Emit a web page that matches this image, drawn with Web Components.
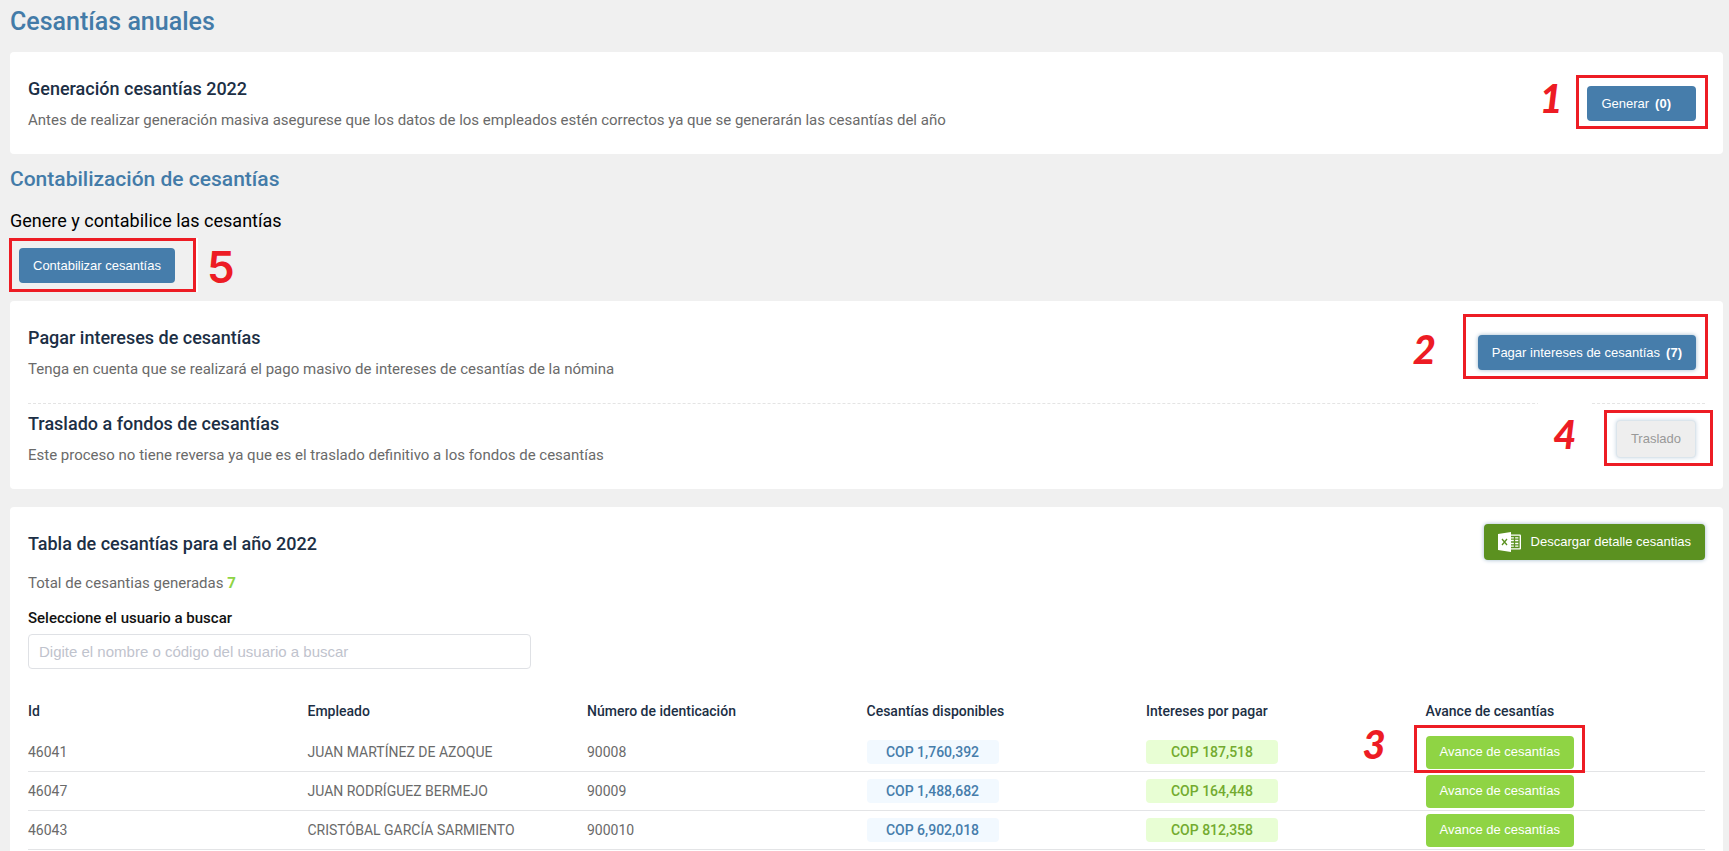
<!DOCTYPE html>
<html lang="es">
<head>
<meta charset="utf-8">
<meta name="viewport" content="width=device-width, initial-scale=1">
<title>Cesantías anuales</title>
<style>
  html, body { margin: 0; }
  body { background: #f0f0f0; font-family: Roboto, "Noto Sans", sans-serif; color: #000; }
</style>
</head>
<body>
<severance-page></severance-page>

<template id="severance-page">
  <style>
    :host { display: flex; flex-direction: column; box-sizing: border-box; min-height: 100vh; padding: 8px 6px 0 10px; }
    h1, h2, p { margin: 0; }
    h1, .section { font-weight: 500; color: #437ba8; }
    h1 { font-size: 25px; line-height: 28px; margin-bottom: 16px; }
    .section { font-size: 21px; line-height: 26px; margin: 12px 0 16px; }
    .lead { font-size: 18px; line-height: 26px; margin-bottom: 14px; }
    .accounting { margin-bottom: 18px; }
    .accounting call-out { margin-left: 9px; }
    ui-card + ui-card { margin-top: 18px; }
    .fill { flex: 1; --card-radius: 4px 4px 0 0; }
    #frame1 { --top: 11px; --right: 12px; --bottom: 8px; --left: 11px; --num-left: -48px; --num-top: -12px; }
    #frame2 { --top: 21px; --right: 12px; --bottom: 9px; --left: 15px; --num-left: -65px; --num-top: -10px; }
    #frame4 { --top: 10px; --right: 17px; --bottom: 8px; --left: 12px; --num-left: -78px; --num-top: -18px;
              --num-width: 54px; --num-paint: #fff; --num-font: italic 900 40px/64px Lato, sans-serif; }
    #frame5 { --top: 10px; --right: 21px; --bottom: 9px; --left: 10px; --num-left: 188px; --num-top: -5px;
              --num-font: normal 600 44px/48px Inter, sans-serif; --edge: 2px 0 #fff; }
  </style>
  <h1>Cesantías anuales</h1>
  <ui-card>
    <action-row heading="Generación cesantías 2022">
      Antes de realizar generación masiva asegurese que los datos de los empleados estén correctos ya que se generarán las cesantías del año
      <call-out slot="action" id="frame1" number="1"><ui-button class="wide" count="(0)">Generar</ui-button></call-out>
    </action-row>
  </ui-card>
  <section class="accounting">
    <h2 class="section">Contabilización de cesantías</h2>
    <p class="lead">Genere y contabilice las cesantías</p>
    <call-out id="frame5" number="5"><ui-button>Contabilizar cesantías</ui-button></call-out>
  </section>
  <ui-card>
    <action-row heading="Pagar intereses de cesantías">
      Tenga en cuenta que se realizará el pago masivo de intereses de cesantías de la nómina
      <call-out slot="action" id="frame2" number="2"><ui-button raised count="(7)">Pagar intereses de cesantías</ui-button></call-out>
    </action-row>
    <action-row divided heading="Traslado a fondos de cesantías">
      Este proceso no tiene reversa ya que es el traslado definitivo a los fondos de cesantías
      <call-out slot="action" id="frame4" number="4"><ui-button disabled raised>Traslado</ui-button></call-out>
    </action-row>
  </ui-card>
  <ui-card class="fill">
    <severance-summary></severance-summary>
    <user-search></user-search>
    <severance-table></severance-table>
  </ui-card>
</template>

<template id="ui-card">
  <style>
    :host { display: block; background: #fff; border-radius: var(--card-radius, 4px); padding: 0 18px; }
  </style>
  <slot></slot>
</template>

<template id="action-row">
  <style>
    :host { display: flex; align-items: center; justify-content: space-between; padding: 26px 9px 25px 0; }
    :host([divided]) { padding-top: 9px; border-top: 1px dashed #e4e4e4; }
    h2 { margin: 0 0 11px; font-size: 18px; line-height: 22px; font-weight: 500; color: #1c2f45; }
    p { margin: 0; font-size: 15px; line-height: 18px; color: #6a6a6a; }
  </style>
  <div><h2></h2><p><slot></slot></p></div>
  <slot name="action"></slot>
</template>

<template id="call-out">
  <style>
    :host { display: inline-block; position: relative; vertical-align: top; }
    .frame { position: absolute; top: calc(0px - var(--top)); right: calc(0px - var(--right)); bottom: calc(0px - var(--bottom)); left: calc(0px - var(--left));
             border: 3px solid #ed1c24; box-shadow: var(--edge, none); pointer-events: none; }
    .number { position: absolute; left: var(--num-left); top: var(--num-top); width: var(--num-width, auto); text-align: center;
              font: var(--num-font, italic 900 40px/48px Lato, sans-serif); color: #ed1c24; background: var(--num-paint, none); }
  </style>
  <slot></slot>
  <span class="frame"></span>
  <span class="number"></span>
</template>

<template id="ui-button">
  <style>
    :host { display: inline-block; vertical-align: top; }
    button { display: flex; align-items: center; gap: 6px; box-sizing: border-box; height: 35px; padding: 0 14px; border: 0; border-radius: 4px;
             background: #467dab; color: #fff; font: 13px/16px "Liberation Sans", Arial, sans-serif; white-space: nowrap; cursor: pointer; }
    :host(.wide) button { padding-right: 25px; }
    :host([raised]) button { box-shadow: 0 0 4px #9fb8cc; }
    :host([tone="green"]) button { height: 33px; background: #8fd444; }
    :host([tone="excel"]) button { height: 36px; background: #5b9120; gap: 10px; }
    :host([disabled]) button { height: 38px; background: #eee; color: #999; border: 1px solid #dbe5ec; cursor: default; box-shadow: 0 0 4px #c9d8e4; }
    b:empty { display: none; }
  </style>
  <button type="button"><slot name="icon"></slot><span><slot></slot></span><b></b></button>
</template>

<template id="severance-summary">
  <style>
    :host { display: flex; justify-content: space-between; align-items: flex-start; padding-top: 17px; }
    h2 { margin: 9px 0 18px; font-size: 18px; line-height: 22px; font-weight: 500; color: #1c2f45; }
    p { margin: 0 0 15px; font-size: 15px; line-height: 20px; color: #6a6a6a; }
    b { color: #8fd444; }
    svg { display: block; }
  </style>
  <div>
    <h2>Tabla de cesantías para el año 2022</h2>
    <p>Total de cesantias generadas <b>7</b></p>
  </div>
  <ui-button tone="excel" raised>
    <svg slot="icon" width="23" height="20" viewBox="0 0 23 20" aria-hidden="true">
      <path fill="#fff" d="M0 2 13 0v20L0 18z"/>
      <path fill="#fff" d="M13 2.500h9a1 1 0 0 1 1 1v13a1 1 0 0 1-1 1h-9z"/>
      <path fill="none" stroke="#5b9120" stroke-width="1.300" d="M4 7l5 6M9 7l-5 6"/>
      <path fill="none" stroke="#5b9120" stroke-width="1.300" d="M13 4.500h8v11h-8M13 7.200h8M13 10h8M13 12.800h8M16.500 4.500v11"/>
    </svg>
    Descargar detalle cesantias
  </ui-button>
</template>

<template id="user-search">
  <style>
    :host { display: block; width: 30%; padding-bottom: 19px; }
    label { display: block; margin-bottom: 6px; font-size: 15px; line-height: 20px; font-weight: 500; color: #111; }
    input { box-sizing: border-box; width: 100%; height: 35px; padding: 0 10px; border: 1px solid #dfe1e5; border-radius: 4px;
            background: #fff; color: #333; font: 15px "Liberation Sans", Arial, sans-serif; }
    input::placeholder { color: #bfc3cd; opacity: 1; }
  </style>
  <label for="user">Seleccione el usuario a buscar</label>
  <input id="user" type="text" placeholder="Digite el nombre o código del usuario a buscar">
</template>

<template id="severance-table">
  <style>
    :host { display: block; }
    table { width: 100%; table-layout: fixed; border-collapse: separate; border-spacing: 0; font-size: 14px; line-height: 20px; color: #6a6a6a; }
    th, td { padding: 0; text-align: left; vertical-align: middle; box-sizing: border-box; }
    th { height: 45px; font-weight: 500; color: #1c2f45; }
    td { height: 39px; border-bottom: 1px solid #e3e4e6; }
    call-out { --top: 11px; --right: 11px; --bottom: 4px; --left: 12px; --num-left: -63px; --num-top: -16px; }
  </style>
  <table>
    <thead><tr>
      <th>Id</th><th>Empleado</th><th>Número de identicación</th>
      <th>Cesantías disponibles</th><th>Intereses por pagar</th><th>Avance de cesantías</th>
    </tr></thead>
    <tbody></tbody>
  </table>
</template>

<template id="amount-badge">
  <style>
    :host { display: block; width: 132px; border-radius: 4px; text-align: center; font-size: 14px; font-weight: 500; line-height: 24px;
            background: #f2f9ff; color: #467dab; }
    :host([tone="green"]) { background: #e8fed4; color: #73ab2f; }
  </style>
  <slot></slot>
</template>

<script>
  class TemplateElement extends HTMLElement {
    constructor() {
      super();
      const template = document.getElementById(this.localName);
      this.attachShadow({ mode: "open" }).append(template.content.cloneNode(true));
    }
    find(selector) { return this.shadowRoot.querySelector(selector); }
  }

  class ActionRow extends TemplateElement {
    connectedCallback() { this.find("h2").textContent = this.getAttribute("heading"); }
  }

  class CallOut extends TemplateElement {
    connectedCallback() { this.find(".number").textContent = this.getAttribute("number"); }
  }

  class UiButton extends TemplateElement {
    connectedCallback() {
      this.find("button").disabled = this.hasAttribute("disabled");
      this.find("b").textContent = this.getAttribute("count") || "";
    }
  }

  class SeveranceTable extends TemplateElement {
    connectedCallback() {
      const rows = [
        ["46041", "JUAN MARTÍNEZ DE AZOQUE", "90008", "COP 1,760,392", "COP 187,518"],
        ["46047", "JUAN RODRÍGUEZ BERMEJO", "90009", "COP 1,488,682", "COP 164,448"],
        ["46043", "CRISTÓBAL GARCÍA SARMIENTO", "900010", "COP 6,902,018", "COP 812,358"]
      ];
      const button = '<ui-button tone="green">Avance de cesantías</ui-button>';
      this.find("tbody").innerHTML = rows.map(([id, name, number, available, interest], i) => `
        <tr><td>${id}</td><td>${name}</td><td>${number}</td>
        <td><amount-badge>${available}</amount-badge></td>
        <td><amount-badge tone="green">${interest}</amount-badge></td>
        <td>${i === 0 ? `<call-out number="3">${button}</call-out>` : button}</td></tr>`).join("");
    }
  }

  customElements.define("ui-card", class extends TemplateElement {});
  customElements.define("amount-badge", class extends TemplateElement {});
  customElements.define("ui-button", UiButton);
  customElements.define("call-out", CallOut);
  customElements.define("action-row", ActionRow);
  customElements.define("severance-summary", class extends TemplateElement {});
  customElements.define("user-search", class extends TemplateElement {});
  customElements.define("severance-table", SeveranceTable);
  customElements.define("severance-page", class extends TemplateElement {});
</script>
</body>
</html>
